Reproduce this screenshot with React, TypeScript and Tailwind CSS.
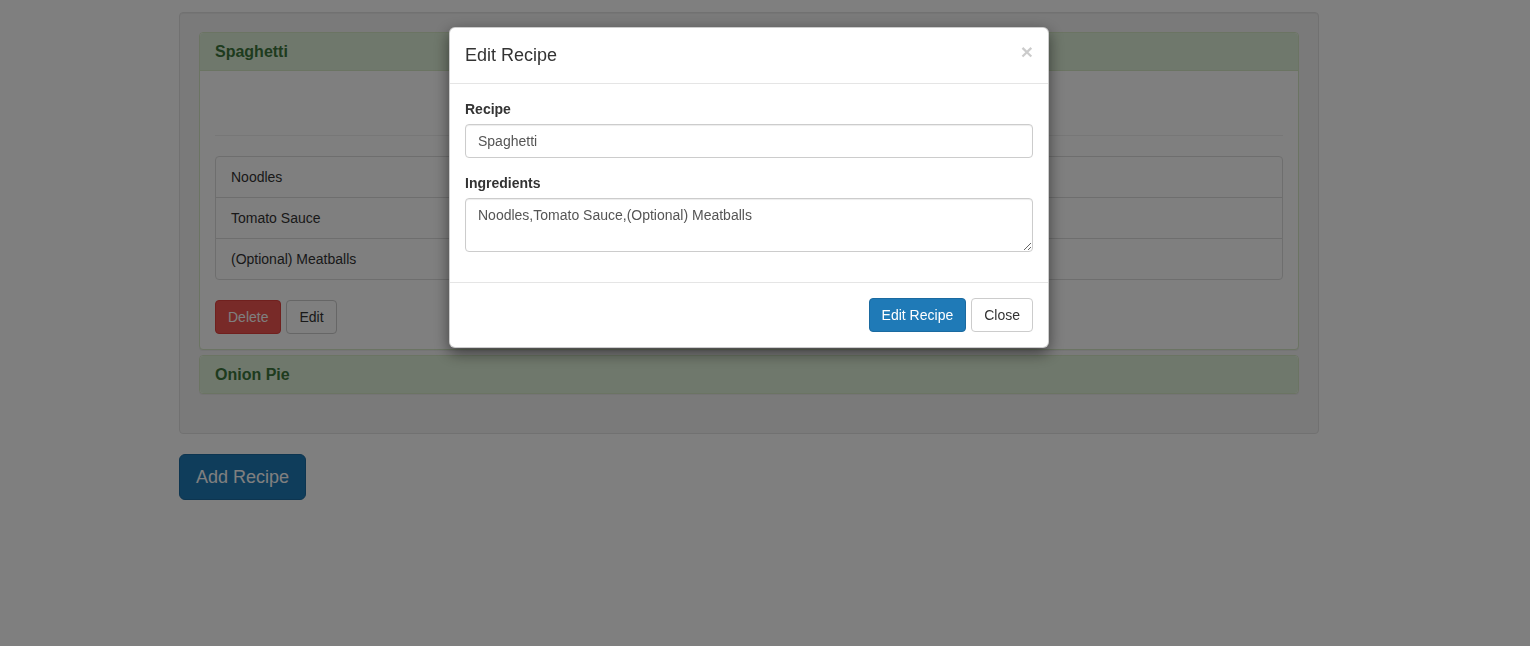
export default function App() {
  const ingredients = ['Noodles', 'Tomato Sauce', '(Optional) Meatballs']

  return (
    <div className="relative min-h-screen bg-white text-[14px] leading-[20px] text-[#333] font-['Liberation_Sans',Arial,sans-serif]">
      <main className="w-[1140px] ml-[179px] pt-[12px]">
        <div className="rounded border border-[#e3e3e3] bg-[#f5f5f5] p-[19px] shadow-[inset_0_1px_1px_rgba(0,0,0,0.05)]">
          <div className="mb-5 flex flex-col gap-[5px]">
            <section className="rounded border border-[#d6e9c6] bg-white shadow-[0_1px_1px_rgba(0,0,0,0.05)]">
              <div className="rounded-t border-b border-[#d6e9c6] bg-[#dff0d8] px-[15px] py-[10px]">
                <h4 className="text-[16px] leading-[17px] font-bold text-[#3c763d]">Spaghetti</h4>
              </div>
              <div className="p-[15px]">
                <div className="h-[29px]" />
                <hr className="my-5 border-t border-[#eee]" />
                <ul className="mb-5">
                  {ingredients.map((item) => (
                    <li
                      key={item}
                      className="-mb-px border border-[#ddd] bg-white px-[15px] py-[10px] first:rounded-t last:mb-0 last:rounded-b"
                    >
                      {item}
                    </li>
                  ))}
                </ul>
                <div className="flex gap-[5px]">
                  <button className="rounded border border-[#e0403c] bg-[#f05450] px-3 py-[6px] text-white">Delete</button>
                  <button className="rounded border border-[#ccc] bg-white px-3 py-[6px] text-[#333]">Edit</button>
                </div>
              </div>
            </section>
            <section className="rounded border border-[#d6e9c6] bg-white shadow-[0_1px_1px_rgba(0,0,0,0.05)]">
              <div className="rounded border-[#d6e9c6] bg-[#dff0d8] px-[15px] py-[10px]">
                <h4 className="text-[16px] leading-[17px] font-bold text-[#3c763d]">Onion Pie</h4>
              </div>
            </section>
          </div>
        </div>
        <button className="mt-5 rounded-[6px] border border-[#1b6aa0] bg-[#1f7ab7] px-4 py-[10px] text-[18px] leading-[24px] text-white">
          Add Recipe
        </button>
      </main>

      {/* backdrop + modal */}
      <div className="fixed inset-0 bg-[rgba(0,0,0,0.5)]">
        <div className="mt-[27px] ml-[449px] w-[600px] rounded-[6px] border border-[rgba(0,0,0,0.2)] bg-white shadow-[0_5px_15px_rgba(0,0,0,0.5)]">
          <div className="flex items-start justify-between border-b border-[#e5e5e5] p-[15px]">
            <h4 className="text-[18px] leading-[25px] text-[#333]">Edit Recipe</h4>
            <button className="mt-[-2px] text-[21px] leading-[21px] font-bold text-black opacity-20">×</button>
          </div>
          <div className="p-[15px]">
            <div className="mb-[15px]">
              <label className="mb-[5px] block font-bold">Recipe</label>
              <input
                readOnly
                value="Spaghetti"
                className="block h-[34px] w-full rounded border border-[#ccc] px-3 py-[6px] text-[#555] shadow-[inset_0_1px_1px_rgba(0,0,0,0.075)] outline-none"
              />
            </div>
            <div className="mb-[15px]">
              <label className="mb-[5px] block font-bold">Ingredients</label>
              <textarea
                readOnly
                defaultValue="Noodles,Tomato Sauce,(Optional) Meatballs"
                className="block h-[54px] w-full rounded border border-[#ccc] px-3 py-[6px] text-[#555] shadow-[inset_0_1px_1px_rgba(0,0,0,0.075)] outline-none"
              />
            </div>
          </div>
          <div className="flex justify-end gap-[5px] border-t border-[#e5e5e5] p-[15px]">
            <button className="rounded border border-[#1b6aa0] bg-[#1f7ab7] px-3 py-[6px] text-white">Edit Recipe</button>
            <button className="rounded border border-[#ccc] bg-white px-3 py-[6px] text-[#333]">Close</button>
          </div>
        </div>
      </div>
    </div>
  )
}
